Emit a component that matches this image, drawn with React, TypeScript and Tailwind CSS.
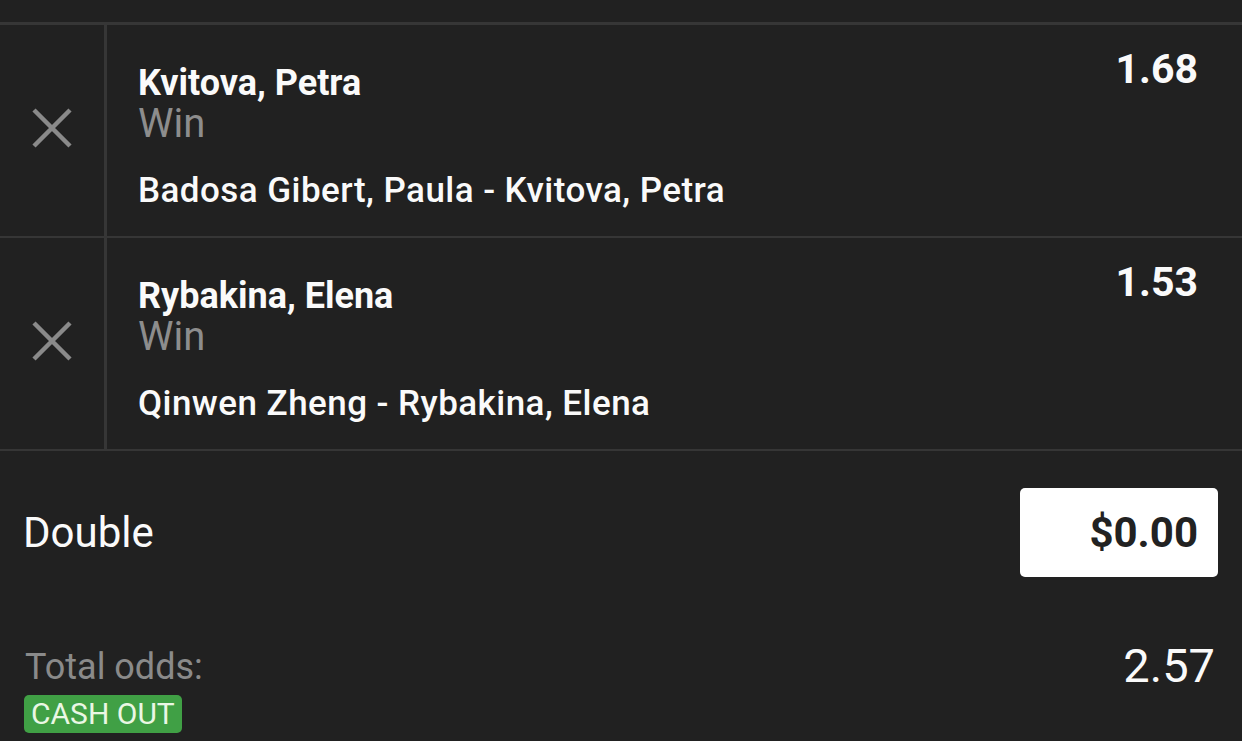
const selections = [
  { id: 1, name: 'Kvitova, Petra', market: 'Win', match: 'Badosa Gibert, Paula - Kvitova, Petra', odds: '1.68' },
  { id: 2, name: 'Rybakina, Elena', market: 'Win', match: 'Qinwen Zheng - Rybakina, Elena', odds: '1.53' },
];

function CloseIcon() {
  return (
    <svg width="40" height="40" viewBox="0 0 40 40" className="text-[#8a8a8a]">
      <path d="M2 2 L38 38 M38 2 L2 38" stroke="currentColor" strokeWidth="4.5" fill="none" />
    </svg>
  );
}

function SelectionRow({ name, market, match, odds }: { name: string; market: string; match: string; odds: string }) {
  return (
    <div className="flex border-b-2 border-[#363636]">
      <div className="w-[107px] shrink-0 border-r-[3px] border-[#363636] flex items-center justify-center pb-[5px]">
        <CloseIcon />
      </div>
      <div className="flex-1 flex justify-between pl-[31px] pr-[44px]">
        <div className="pt-[38px] pb-[25px]">
          <div className="text-[36px] leading-[40px] font-bold text-[#fafafa]">{name}</div>
          <div className="text-[40px] leading-[42px] text-[#8d8d8d]">{market}</div>
          <div className="mt-[26px] text-[35px] leading-[40px] font-medium tracking-[0.45px] text-[#fafafa]">{match}</div>
        </div>
        <div className="pt-[21px] text-[41px] leading-[46px] font-bold text-[#fafafa]">{odds}</div>
      </div>
    </div>
  );
}

export default function App() {
  return (
    <div className="w-[1242px] h-[741px] overflow-hidden bg-[#212121] font-['Roboto',sans-serif]">
      <div className="h-[25px] border-b-[3px] border-[#363636]" />
      {selections.map((s) => (
        <SelectionRow key={s.id} {...s} />
      ))}

      <div className="pt-[37px] pl-[23px] pr-[24px] flex items-center justify-between">
        <span className="text-[42px] leading-[48px] text-[#fafafa]">Double</span>
        <div className="w-[198px] h-[89px] rounded-[5px] bg-white flex items-center justify-end pr-[20px]">
          <span className="text-[42px] leading-[50px] font-bold text-[#222222]">$0.00</span>
        </div>
      </div>

      <div className="mt-[61px] pl-[24px] pr-[27px] flex items-start justify-between">
        <div className="pt-[9px]">
          <div className="pl-[1px] text-[36px] leading-[40px] text-[#8a8a8a]">Total odds:</div>
          <div className="mt-[8px] inline-block rounded-[5px] bg-[#40a045] px-[7px] text-[30px] leading-[38px] text-[#eaf7e4]">
            CASH OUT
          </div>
        </div>
        <div className="text-[47px] leading-[56px] text-[#fafafa]">2.57</div>
      </div>
    </div>
  );
}
